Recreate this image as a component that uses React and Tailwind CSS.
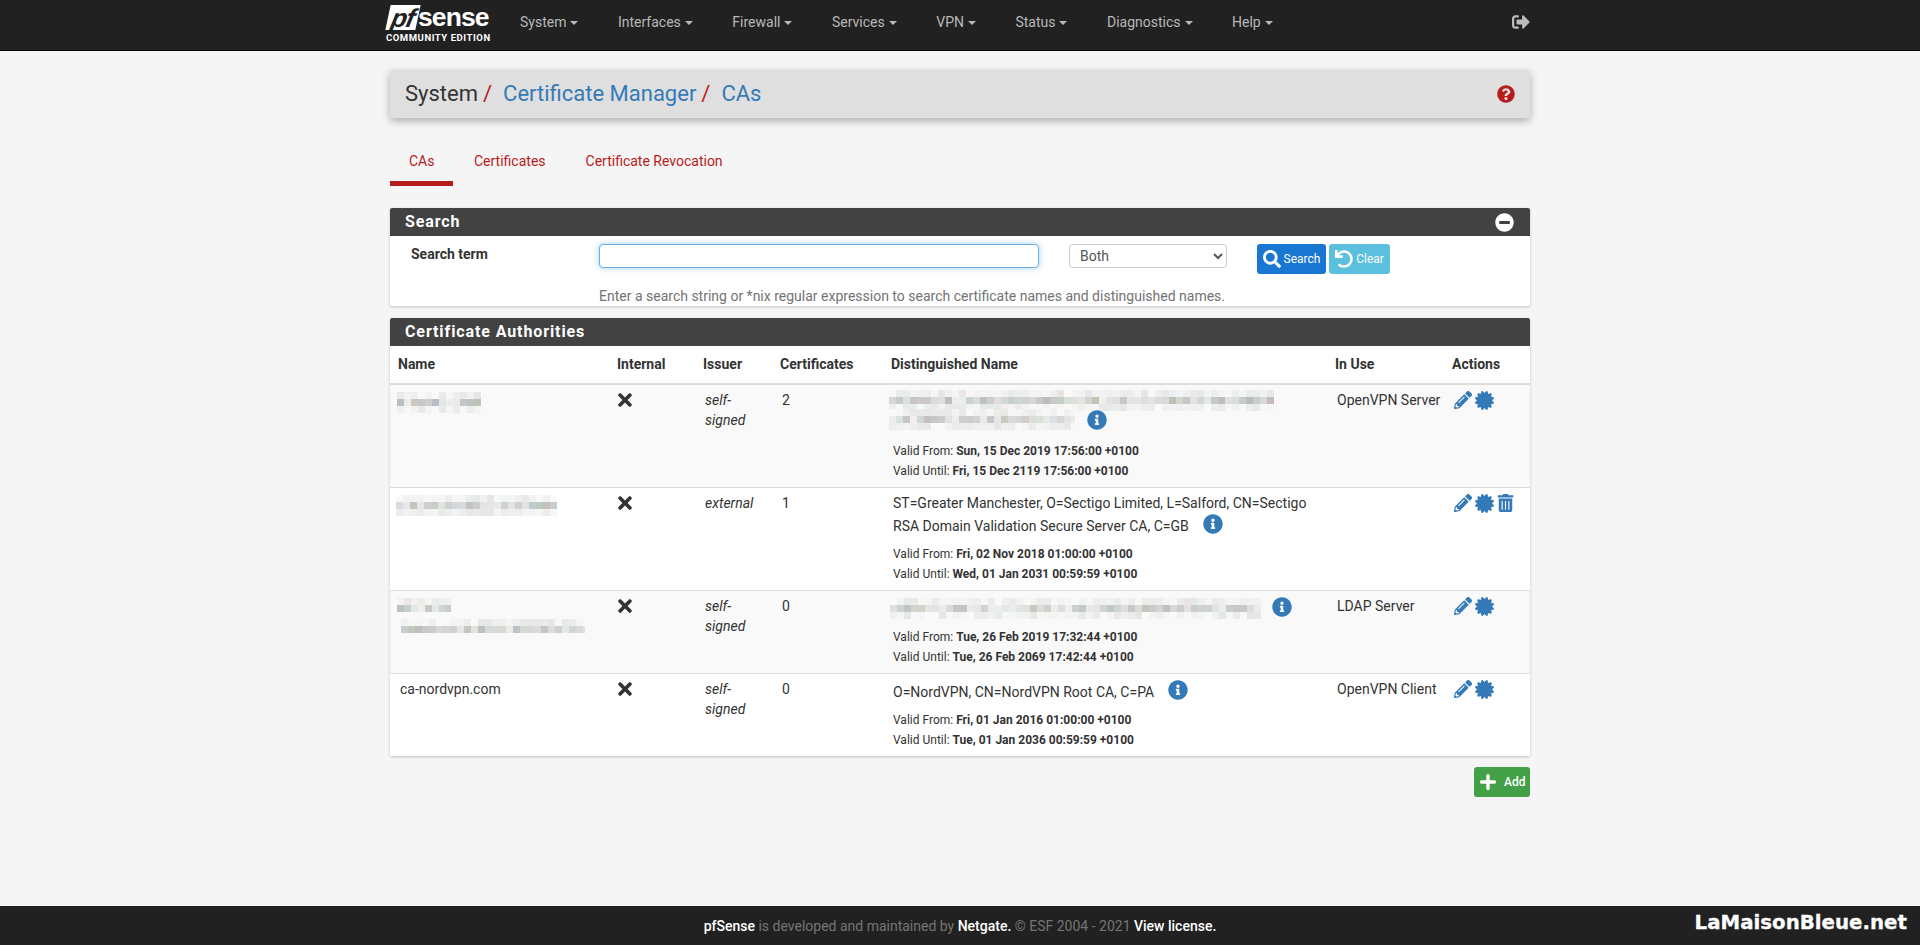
import React from "react";
import { FaPencilAlt, FaCertificate, FaTrashAlt, FaSearch, FaUndo, FaPlus, FaTimes, FaInfoCircle, FaMinusCircle, FaQuestionCircle, FaSignOutAlt } from "react-icons/fa";

function Mosaic({ w, seed, rows = 3, className = "" }) {
  const cell = 7;
  const rects = [];
  let s = seed * 9301 + 49297;
  const rnd = () => {
    s = (s * 9301 + 49297) % 233280;
    return s / 233280;
  };
  const cols = Math.ceil(w / cell);
  for (let r = 0; r < rows; r++) {
    for (let c = 0; c < cols; c++) {
      const v = rnd();
      const mid = r === Math.floor(rows / 2);
      const light = mid ? 74 + v * 20 : 90 + v * 8;
      const hue = Math.floor(rnd() * 240);
      const sat = Math.floor(rnd() * 12);
      rects.push(<rect key={r + "-" + c} x={c * cell} y={r * cell} width={cell} height={cell} fill={`hsl(${hue} ${sat}% ${light}%)`} />);
    }
  }
  return (
    <svg width={w} height={rows * cell} viewBox={`0 0 ${w} ${rows * cell}`} shapeRendering="crispEdges" className={"block " + className}>
      {rects}
    </svg>
  );
}

const navItems = ["System", "Interfaces", "Firewall", "Services", "VPN", "Status", "Diagnostics", "Help"];

function Caret() {
  return <span className="ml-[4px] inline-block w-0 h-0 border-x-[4px] border-x-transparent border-t-[4px] border-t-current align-middle" />;
}

function Logo() {
  return (
    <div className="w-[106px] -ml-[3px] h-[50px] relative select-none">
      <div className="flex items-start pt-[5px]">
        <span className="w-[30px] h-[25px] bg-white -skew-x-12 ml-[1px] flex items-center justify-center text-[#212121] italic font-bold text-[26px] leading-none [font-family:'Liberation_Sans',sans-serif] tracking-[-1px]">
          pf
        </span>
        <span className="text-white font-bold text-[26.5px] leading-[25px] tracking-[-0.9px] [font-family:'Liberation_Sans',sans-serif]">sense</span>
      </div>
      <div className="text-white font-bold text-[9.5px] leading-[10px] mt-[3px] -ml-[1px] tracking-[0.55px] whitespace-nowrap [font-family:'Roboto',sans-serif]">COMMUNITY EDITION</div>
    </div>
  );
}

function Actions({ trash }) {
  return (
    <div className="flex items-center gap-[3px] text-[#337ab7] h-[20px]">
      <FaPencilAlt className="w-[18px] h-[18px]" />
      <FaCertificate className="w-[19px] h-[19px]" />
      {trash && <FaTrashAlt className="w-[17px] h-[18px]" />}
    </div>
  );
}

function Info() {
  return <span className="ml-[14px] mb-[4px] flex"><FaInfoCircle className="w-[20px] h-[20px] text-[#337ab7]" /></span>;
}

function Valid({ from, until }) {
  return (
    <div className="mt-[6px] text-[12px] leading-[20px]">
      <div>Valid From: <b className="font-bold">{from}</b></div>
      <div>Valid Until: <b className="font-bold">{until}</b></div>
    </div>
  );
}

function Row({ odd, name, issuer, certs, dn, from, until, use, trash }) {
  return (
    <tr className={(odd ? "bg-[#f9f9f9] " : "bg-white ") + "border-t border-[#dddddd]"}>
      <td className="pl-[10px] pr-[8px] pt-[5px] pb-[6px] align-top">{name}</td>
      <td className="pl-[9px] pr-[8px] pt-[5px] pb-[6px] align-top">
        <div className="h-[20px] flex items-center"><FaTimes className="w-[14px] h-[20px] text-[#333333]" /></div>
      </td>
      <td className="pl-[10px] pr-[8px] pt-[5px] pb-[6px] align-top italic">{issuer}</td>
      <td className="pl-[10px] pr-[8px] pt-[5px] pb-[6px] align-top">{certs}</td>
      <td className="pl-[10px] pr-[8px] pt-[5px] pb-[6px] align-top">
        {dn}
        <Valid from={from} until={until} />
      </td>
      <td className="pl-[10px] pr-[4px] pt-[5px] pb-[6px] align-top whitespace-nowrap">{use}</td>
      <td className="pl-[10px] pr-[4px] pt-[5px] pb-[6px] align-top"><Actions trash={trash} /></td>
    </tr>
  );
}

function PanelHead({ title, children }) {
  return (
    <div className="h-[28px] bg-[#424242] rounded-t-[2px] pl-[15px] pr-[16px] flex items-center justify-between text-white font-bold text-[16px] tracking-[0.9px]">
      <span>{title}</span>
      {children}
    </div>
  );
}

export default function App() {
  return (
    <div className="h-screen flex flex-col overflow-hidden bg-[#f5f5f5] text-[14px] leading-[20px] text-[#333333] [font-family:'Roboto','Liberation_Sans',sans-serif]">
      <header className="h-[51px] shrink-0 bg-[#212121] border-b border-black">
        <div className="w-[1140px] mx-auto h-[50px] flex items-center">
          <Logo />
          <nav className="flex items-center gap-[39.5px] ml-[27px] text-[#b8b8b8] -mt-[6px]">
            {navItems.map((n) => (
              <span key={n} className="whitespace-nowrap">{n}<Caret /></span>
            ))}
          </nav>
          <FaSignOutAlt className="ml-auto w-[18px] h-[18px] text-[#bdbdbd] -mt-[6px]" />
        </div>
      </header>

      <main className="flex-1 w-[1140px] mx-auto">
        <div className="mt-[19px] h-[48px] bg-[#dfdfdf] rounded-[3px] shadow-[0_3px_8px_rgba(0,0,0,0.3)] pl-[15px] pr-[15px] flex items-center justify-between">
          <div className="text-[22px] leading-[26px] whitespace-nowrap">
            <span>System</span>
            <span className="text-[#b71c1c] ml-[5px] mr-[11px]">/</span>
            <span className="text-[#337ab7]">Certificate Manager</span>
            <span className="text-[#b71c1c] ml-[5px] mr-[11px]">/</span>
            <span className="text-[#337ab7]">CAs</span>
          </div>
          <FaQuestionCircle className="w-[18px] h-[18px] text-[#b71c1c]" />
        </div>

        <div className="mt-[21px] flex text-[#b71c1c] text-[14px] h-[47px]">
          <div className="px-[19px] pt-[12px] border-b-[5px] border-[#b71c1c] mr-[2px] h-[47px] w-[63px]">CAs</div>
          <div className="px-[19px] pt-[12px] mr-[2px] whitespace-nowrap">Certificates</div>
          <div className="px-[19px] pt-[12px] whitespace-nowrap">Certificate Revocation</div>
        </div>

        <section className="mt-[22px] bg-white rounded-[2px] shadow-[0_1px_3px_rgba(0,0,0,0.2)]">
          <PanelHead title="Search">
            <FaMinusCircle className="w-[19px] h-[19px] text-white" />
          </PanelHead>
          <div className="h-[70px] pt-[8px] relative">
            <div className="flex items-start">
              <label className="w-[209px] pl-[21px] font-bold leading-[20px]">Search term</label>
              <input type="text" aria-label="Search term" className="w-[440px] h-[24px] bg-white border border-[#66afe9] rounded-[4px] shadow-[0_0_6px_rgba(102,175,233,0.6)] outline-none" />
              <select aria-label="Scope" className="ml-[30px] w-[158px] h-[24px] bg-white border border-[#cccccc] rounded-[4px] pl-[6px] text-[#555555] text-[14px] leading-[20px]">
                <option>Both</option>
              </select>
              <button type="button" className="ml-[30px] w-[69px] h-[30px] bg-[#1976d2] rounded-[3px] text-white text-[12px] flex items-center justify-center gap-[3px]">
                <FaSearch className="w-[18px] h-[18px]" />Search
              </button>
              <button type="button" className="ml-[3px] w-[61px] h-[30px] bg-[#5bc0de] rounded-[3px] text-white text-[12px] flex items-center justify-center gap-[3px]">
                <FaUndo className="w-[18px] h-[18px]" />Clear
              </button>
            </div>
            <p className="mt-[12px] ml-[209px] text-[#737373] text-[14px]">Enter a search string or *nix regular expression to search certificate names and distinguished names.</p>
          </div>
        </section>

        <section className="mt-[12px] bg-white rounded-[2px] shadow-[0_1px_3px_rgba(0,0,0,0.2)]">
          <PanelHead title="Certificate Authorities" />
          <table className="w-full table-fixed border-collapse">
            <thead>
              <tr className="h-[38px] text-left border-b-2 border-[#dddddd]">
                <th className="w-[219px] pl-[8px] pb-[2px] font-bold">Name</th>
                <th className="w-[86px] pl-[8px] pb-[2px] font-bold">Internal</th>
                <th className="w-[77px] pl-[8px] pb-[2px] font-bold">Issuer</th>
                <th className="w-[111px] pl-[8px] pb-[2px] font-bold">Certificates</th>
                <th className="w-[444px] pl-[8px] pb-[2px] font-bold">Distinguished Name</th>
                <th className="w-[117px] pl-[8px] pb-[2px] font-bold">In Use</th>
                <th className="w-[86px] pl-[8px] pb-[2px] font-bold">Actions</th>
              </tr>
            </thead>
            <tbody>
              <Row
                odd
                name={<div className="pt-[2px] -ml-[3px]"><Mosaic w={84} seed={3} /></div>}
                issuer="self-signed"
                certs="2"
                dn={
                  <div className="h-[45px] -ml-[4px]">
                    <Mosaic w={385} seed={11} />
                    <div className="flex items-center -mt-[2px]"><Mosaic w={186} seed={17} /><span className="ml-[12px] flex"><FaInfoCircle className="w-[20px] h-[20px] text-[#337ab7]" /></span></div>
                  </div>
                }
                from="Sun, 15 Dec 2019 17:56:00 +0100"
                until="Fri, 15 Dec 2119 17:56:00 +0100"
                use="OpenVPN Server"
              />
              <Row
                name={<div className="pt-[2px] -ml-[4px]"><Mosaic w={161} seed={23} /></div>}
                issuer="external"
                certs="1"
                dn={
                  <div>
                    <div>ST=Greater Manchester, O=Sectigo Limited, L=Salford, CN=Sectigo</div>
                    <div className="h-[25px] flex items-center">RSA Domain Validation Secure Server CA, C=GB<Info /></div>
                  </div>
                }
                from="Fri, 02 Nov 2018 01:00:00 +0100"
                until="Wed, 01 Jan 2031 00:59:59 +0100"
                trash
              />
              <Row
                odd
                name={<div className="pt-[2px] -ml-[3px]"><Mosaic w={54} seed={31} rows={2} /><div className="mt-[7px] ml-[4px]"><Mosaic w={184} seed={37} rows={2} /></div></div>}
                issuer="self-signed"
                certs="0"
                dn={
                  <div className="h-[25px] -ml-[3px] flex items-center"><Mosaic w={371} seed={41} /><span className="ml-[11px] mb-[4px] flex"><FaInfoCircle className="w-[20px] h-[20px] text-[#337ab7]" /></span></div>
                }
                from="Tue, 26 Feb 2019 17:32:44 +0100"
                until="Tue, 26 Feb 2069 17:42:44 +0100"
                use="LDAP Server"
              />
              <Row
                name="ca-nordvpn.com"
                issuer="self-signed"
                certs="0"
                dn={
                  <div className="h-[25px] flex items-center">O=NordVPN, CN=NordVPN Root CA, C=PA<Info /></div>
                }
                from="Fri, 01 Jan 2016 01:00:00 +0100"
                until="Tue, 01 Jan 2036 00:59:59 +0100"
                use="OpenVPN Client"
              />
            </tbody>
          </table>
        </section>

        <div className="mt-[11px] flex justify-end">
          <button type="button" className="w-[56px] h-[30px] bg-[#43a047] rounded-[3px] text-white text-[12px] font-medium flex items-center pl-[5px] gap-[7px]">
            <FaPlus className="w-[18px] h-[18px]" />Add
          </button>
        </div>
      </main>

      <footer className="h-[39px] shrink-0 bg-[#212121] relative flex items-center justify-center text-[#757575] text-[14px]">
        <span><b className="text-white font-medium">pfSense</b> is developed and maintained by <b className="text-white font-medium">Netgate.</b> © ESF 2004 - 2021 <b className="text-white font-medium">View license.</b></span>
        <span className="absolute right-[13px] top-[5px] text-white font-bold text-[19.8px] leading-[24px] [-webkit-text-stroke:0.3px_white] [font-family:'DejaVu_Sans',sans-serif]">LaMaisonBleue.net</span>
      </footer>
    </div>
  );
}
